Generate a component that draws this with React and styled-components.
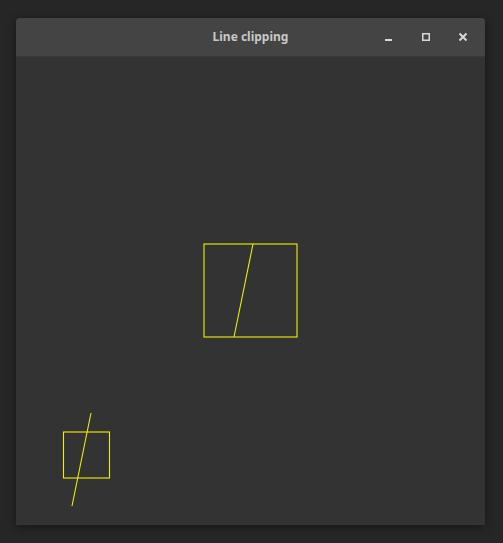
import React from 'react';
import styled, { createGlobalStyle } from 'styled-components';

const GlobalStyle = createGlobalStyle`
  html, body {
    margin: 0;
    padding: 0;
    background: #262626;
  }
`;

const Desktop = styled.div`
  width: 503px;
  height: 543px;
  padding: 18px 0 0 16px;
  box-sizing: border-box;
  background: #262626;
`;

const Window = styled.div`
  width: 469px;
  height: 507px;
  display: flex;
  flex-direction: column;
  border-radius: 4px 4px 0 0;
  overflow: hidden;
  background: #333333;
  box-shadow: 0 2px 10px rgba(0, 0, 0, 0.45);
`;

const TitleBar = styled.div`
  position: relative;
  height: 39px;
  flex: 0 0 39px;
  display: flex;
  align-items: center;
  justify-content: center;
  background: #444444;
  border-bottom: 1px solid #3a3a3a;
  box-sizing: border-box;
`;

const Title = styled.span`
  font-family: "Noto Sans", "DejaVu Sans", sans-serif;
  font-size: 12px;
  font-weight: 700;
  color: #c8c8c8;
  margin-top: -1px;
`;

const Controls = styled.div`
  position: absolute;
  right: 13px;
  top: 0;
  height: 100%;
  display: flex;
  align-items: center;
  gap: 19px;
`;

const ControlButton = styled.div`
  width: 18px;
  height: 18px;
  display: flex;
  align-items: center;
  justify-content: center;
  color: #d8d8d8;
`;

const Canvas = styled.svg`
  display: block;
  flex: 1 1 auto;
  width: 469px;
  height: 468px;
`;

const STROKE = '#f0f000';

export default function App() {
  return (
    <>
      <GlobalStyle />
      <Desktop>
        <Window>
          <TitleBar>
            <Title>Line clipping</Title>
            <Controls>
              <ControlButton>
                <svg width="10" height="10" viewBox="0 0 10 10">
                  <rect x="1" y="7" width="7" height="2" fill="currentColor" />
                </svg>
              </ControlButton>
              <ControlButton>
                <svg width="10" height="10" viewBox="0 0 10 10">
                  <rect x="1.75" y="1.75" width="6.5" height="6.5" fill="none" stroke="currentColor" strokeWidth="1.5" />
                </svg>
              </ControlButton>
              <ControlButton>
                <svg width="10" height="10" viewBox="0 0 10 10">
                  <path d="M1.5 1.5 L8.5 8.5 M8.5 1.5 L1.5 8.5" stroke="currentColor" strokeWidth="2" />
                </svg>
              </ControlButton>
            </Controls>
          </TitleBar>
          <Canvas viewBox="0 0 469 468">
            <g fill="none" stroke={STROKE} strokeWidth="1.1">
              <rect x="188" y="187" width="93" height="93" />
              <line x1="237" y1="187" x2="218" y2="280" />
              <rect x="47.5" y="375" width="46" height="46" />
              <line x1="75" y1="356" x2="56" y2="449" />
            </g>
          </Canvas>
        </Window>
      </Desktop>
    </>
  );
}
